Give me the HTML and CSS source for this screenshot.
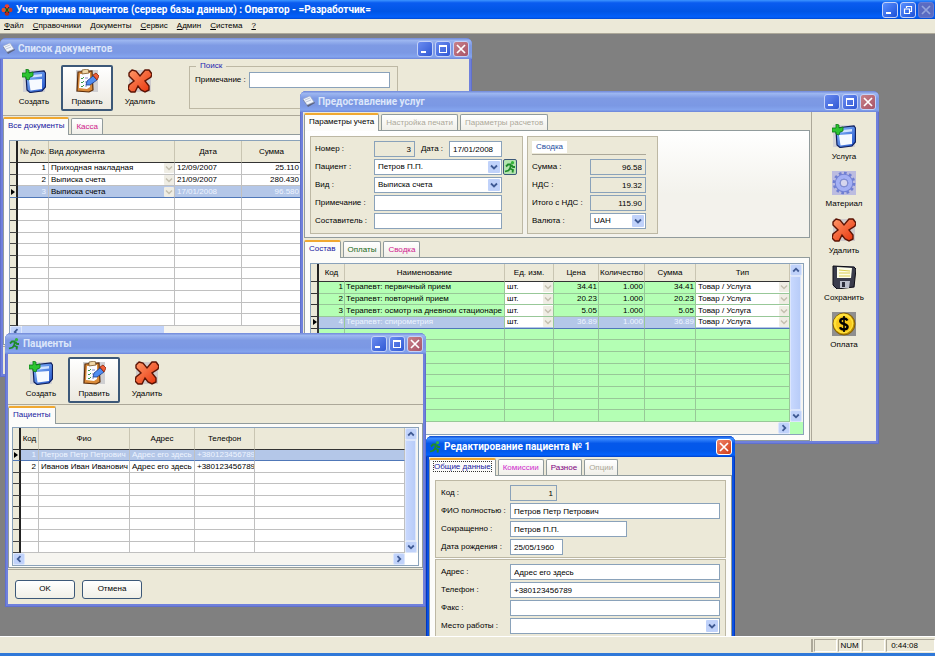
FILE: index.html
```html
<!DOCTYPE html>
<html lang="ru">
<head>
    <meta charset="UTF-8">
    <meta name="viewport" content="width=device-width, initial-scale=1.0">
    <title>Учет приема пациентов</title>
    <link rel="stylesheet" href="styles.css">
</head>
<body>
    <!-- Shared icons -->
    <svg class="defs" width="0" height="0" aria-hidden="true">
        <defs>
            <linearGradient id="gBlue" x1="0" y1="0" x2="1" y2="1">
                <stop offset="0" stop-color="#8fc0ff"/><stop offset="1" stop-color="#1f50c8"/>
            </linearGradient>
            <linearGradient id="gRed" x1="0" y1="0" x2="1" y2="1">
                <stop offset="0" stop-color="#ff9a6a"/><stop offset="1" stop-color="#e83008"/>
            </linearGradient>
        </defs>
        <symbol id="i-new" viewBox="0 0 24 24">
            <rect x="1" y="1" width="22" height="22" fill="#d3d3d6"/>
            <path d="M4 6 L8 3.500 L22 2 L23.500 4 V18 L20 22 L8 23.500 L5 21 Z" fill="url(#gBlue)" stroke="#10205c" stroke-width="1.2"/>
            <path d="M7 11 L20 10 L20 20 L8.500 21.500 Z" fill="#f6faff"/>
            <path d="M10 6 L20 5 V7.500 L10 8.500 Z" fill="#cfe2ff"/>
            <path d="M4 0 L7 1 L7 4 L11 3 L11 7 L8 8 L7 11 L4 10 L4 8 L0 8 L0 4 L4 4 Z" fill="#2cc431" stroke="#0c7a14" stroke-width=".8"/>
        </symbol>
        <symbol id="i-edit" viewBox="0 0 24 24">
            <rect x="1" y="1" width="22" height="22" fill="#cfcfd2"/>
            <path d="M3 3 L17 2 L18 21 L14 23 L2 22 Z" fill="#d98a3a" stroke="#5c2c08" stroke-width="1.2"/>
            <path d="M5 5 L15 4 L15 18 L12 20 L4 19 Z" fill="#fbfbff"/>
            <path d="M7 1 L13 0 L14 4 L7 5 Z" fill="#f1d8a8" stroke="#6b4a20" stroke-width=".7"/>
            <path d="M6 9 l1 1 2-2 M6 13 l1 1 2-2 M6 17 l1 1 2-2" fill="none" stroke="#3a9a48" stroke-width="1"/>
            <path d="M10 9 H13 M10 13 H12 M10 17 H12" stroke="#8888c8" stroke-width="1"/>
            <path d="M12 12 L18 7 L22 11 L15 16 L11 16 Z" fill="#4f8cf0" stroke="#1b3c90" stroke-width=".8"/>
            <path d="M18 6 L21 4 L24 7 L22 11 Z" fill="#f0603a" stroke="#8c2408" stroke-width=".8"/>
        </symbol>
        <symbol id="i-delete" viewBox="0 0 24 24">
            <rect x="1" y="1" width="22" height="22" fill="#cfcbcb"/>
            <path d="M4 1 L8 2 L12 7 L17 1 L21 1 L24 5 L23 8 L17 12 L21 17 L21 21 L17 23 L13 21 L10 17 L7 23 L3 23 L0 20 L1 16 L6 12 L1 7 L1 4 Z" fill="url(#gRed)" stroke="#5c1404" stroke-width="1.4"/>
        </symbol>
        <symbol id="i-gear" viewBox="0 0 24 24">
            <rect width="24" height="24" fill="#bcbce0"/>
            <circle cx="12" cy="12" r="9.800" fill="none" stroke="#6f7fd2" stroke-width="3" stroke-dasharray="2.600 2.500"/>
            <circle cx="12" cy="12" r="6.500" fill="none" stroke="#7482d4" stroke-width="5.500"/>
            <circle cx="12" cy="12" r="6.300" fill="none" stroke="#a4b0f4" stroke-width="4"/>
            <circle cx="12" cy="12" r="3.800" fill="#d6d6ee" stroke="#6676c4" stroke-width=".8"/>
        </symbol>
        <symbol id="i-save" viewBox="0 0 24 24">
            <rect x="1" y="1" width="22" height="22" fill="#c9c9cc"/>
            <path d="M1 1 L22 2 L24 4 L22 22 L5 24 L1 20 Z" fill="#3a3c4c" stroke="#0c0c14" stroke-width="1"/>
            <path d="M5 2 L20 3 L19 13 L5 13 Z" fill="#fdfde8"/>
            <path d="M7 5 L18 6 M7 8 L18 8 M7 11 L18 11" stroke="#d8cc50" stroke-width="1"/>
            <path d="M8 16 H18 L17 23 L8 23 Z" fill="#bcc0cc"/>
            <path d="M10 17 H13 V22 H10 Z" fill="#2c2e3c"/>
        </symbol>
        <symbol id="i-pay" viewBox="0 0 24 24">
            <rect width="24" height="24" fill="#8f8f8f"/>
            <circle cx="12" cy="12" r="11" fill="#b88a00" stroke="#7a5600" stroke-width=".8"/>
            <circle cx="11.5" cy="11.5" r="10" fill="#ffe23a"/>
            <circle cx="12" cy="12" r="8" fill="#f8c81c"/>
            <path d="M15.5 8.5 C14 5.6 8 6 8.300 9.300 C8.600 12.500 15.500 11.200 15.600 14.800 C15.600 18 9.500 18.400 8 15.200" fill="none" stroke="#000" stroke-width="2.4"/>
            <path d="M12 4 V20" stroke="#000" stroke-width="1.6"/>
        </symbol>
        <symbol id="i-doc" viewBox="0 0 12 12">
            <path d="M0 4 L7 1 L12 7 L5 11 Z" fill="#5c6480"/>
            <path d="M0 3 L7 0 L11 6 L4 9 Z" fill="#f2f6fc" stroke="#9aa8c4" stroke-width=".6"/>
            <path d="M2 4 L7 2 M3 6 L8 4" stroke="#a8b4cc" stroke-width=".7"/>
        </symbol>
        <symbol id="i-run" viewBox="0 0 12 12">
            <circle cx="8.500" cy="1.700" r="1.600" fill="#35b43a"/>
            <path d="M7.500 3.500 L4 3.500 L2 5.500 M7 4 L6 7.500 L9 9 L8.500 11.500 M6 7.500 L4.500 9.500 L1 10.500 M7.500 4 L9 6 L11 6" fill="none" stroke="#1f8c2a" stroke-width="1.800"/>
        </symbol>
        <symbol id="i-app" viewBox="0 0 12 12">
            <circle cx="6" cy="2.500" r="2.300" fill="#f0402c"/>
            <circle cx="2.800" cy="6" r="2.300" fill="#e8502c"/>
            <circle cx="9.200" cy="6" r="2.300" fill="#c83c28"/>
            <circle cx="6" cy="9.500" r="2.300" fill="#b4281c"/>
            <circle cx="6" cy="6" r="2" fill="#38a83c"/>
            <path d="M4 3 L8 9 M8 3 L4 9" stroke="#2c1408" stroke-width=".8"/>
        </symbol>
        <symbol id="i-min" viewBox="0 0 12 12"><path d="M2 8 H7 V10 H2 Z" fill="#fff"/></symbol>
        <symbol id="i-max" viewBox="0 0 12 12"><path d="M2 2 H10 V10 H2 Z M3 4 V9 H9 V4 Z" fill="#fff" fill-rule="evenodd"/></symbol>
        <symbol id="i-restore" viewBox="0 0 12 12">
            <path d="M4.500 4 V2.500 H9.500 V7.500 H8 M2.500 5 H7.500 V9.500 H2.500 Z" fill="none" stroke="#fff" stroke-width="1.200"/>
        </symbol>
        <symbol id="i-close" viewBox="0 0 12 12"><path d="M2 2 L10 10 M10 2 L2 10" stroke="#fff" stroke-width="1.700"/></symbol>
        <symbol id="i-chevron" viewBox="0 0 8 8"><path d="M1.200 2.500 L4 5.300 L6.800 2.500" fill="none" stroke="#3f5a94" stroke-width="1.800"/></symbol>
    </svg>

    <header class="app-title">
        <svg class="title-icon"><use href="#i-app"/></svg>
        <h1>Учет приема пациентов (сервер базы данных) : Оператор - =Разработчик=</h1>
        <div class="win-buttons">
            <button class="win-btn bright" aria-label="Свернуть"><svg><use href="#i-min"/></svg></button>
            <button class="win-btn bright" aria-label="Восстановить"><svg><use href="#i-restore"/></svg></button>
            <button class="win-btn off" aria-label="Закрыть" disabled><svg><use href="#i-close"/></svg></button>
        </div>
    </header>

    <nav class="menu">
        <a href="#"><u>Ф</u>айл</a>
        <a href="#"><u>С</u>правочники</a>
        <a href="#"><u>Д</u>окументы</a>
        <a href="#"><u>С</u>ервис</a>
        <a href="#"><u>А</u>дмин</a>
        <a href="#"><u>С</u>истема</a>
        <a href="#"><u>?</u></a>
    </nav>

    <main class="desktop">
        <!-- Documents list -->
        <section class="window win-docs">
            <div class="caption">
                <svg class="title-icon"><use href="#i-doc"/></svg>
                <h2>Список документов</h2>
                <div class="win-buttons">
                    <button class="win-btn" aria-label="Свернуть"><svg><use href="#i-min"/></svg></button>
                    <button class="win-btn" aria-label="Развернуть"><svg><use href="#i-max"/></svg></button>
                    <button class="win-btn close" aria-label="Закрыть"><svg><use href="#i-close"/></svg></button>
                </div>
            </div>
            <div class="client">
                <div class="toolbar">
                    <button class="tool"><svg><use href="#i-new"/></svg>Создать</button>
                    <button class="tool current"><svg><use href="#i-edit"/></svg>Править</button>
                    <button class="tool"><svg><use href="#i-delete"/></svg>Удалить</button>
                    <fieldset class="search">
                        <legend>Поиск</legend>
                        <label for="searchNote">Примечание :</label>
                        <input type="text" id="searchNote">
                    </fieldset>
                </div>
                <div class="tabs">
                    <button class="tab active blue">Все документы</button>
                    <button class="tab pink">Касса</button>
                </div>
                <div class="page">
                    <div class="grid">
                        <table class="docs" data-rows="14">
                            <colgroup><col class="c-mark"><col class="c-no"><col class="c-kind"><col class="c-date"><col class="c-sum"><col></colgroup>
                            <thead>
                                <tr><th></th><th>№ Док.</th><th class="left">Вид документа</th><th>Дата</th><th>Сумма</th><th></th></tr>
                            </thead>
                            <tbody>
                                <tr><td></td><td class="num">1</td><td class="combo"><select aria-label="Вид документа 1" disabled><option>Приходная накладная</option></select></td><td>12/09/2007</td><td class="num">25.110</td><td></td></tr>
                                <tr><td></td><td class="num">2</td><td class="combo"><select aria-label="Вид документа 2" disabled><option>Выписка счета</option></select></td><td>21/09/2007</td><td class="num">280.430</td><td></td></tr>
                                <tr class="selected"><td></td><td class="num">3</td><td class="combo"><select aria-label="Вид документа 3" disabled><option>Выписка счета</option></select></td><td>17/01/2008</td><td class="num">96.580</td><td></td></tr>
                            </tbody>
                        </table>
                        <div class="hscroll">
                            <button class="arrow left" aria-label="Влево"><svg><use href="#i-chevron"/></svg></button>
                            <span class="thumb"></span>
                            <button class="arrow right" aria-label="Вправо"><svg><use href="#i-chevron"/></svg></button>
                        </div>
                    </div>
                </div>
                <div class="footer"></div>
            </div>
        </section>

        <!-- Services -->
        <section class="window win-services">
            <div class="caption">
                <svg class="title-icon"><use href="#i-doc"/></svg>
                <h2>Предоставление услуг</h2>
                <div class="win-buttons">
                    <button class="win-btn" aria-label="Свернуть"><svg><use href="#i-min"/></svg></button>
                    <button class="win-btn" aria-label="Развернуть"><svg><use href="#i-max"/></svg></button>
                    <button class="win-btn close" aria-label="Закрыть"><svg><use href="#i-close"/></svg></button>
                </div>
            </div>
            <div class="client split">
                <div class="work">
                    <div class="tabs">
                        <button class="tab active">Параметры учета</button>
                        <button class="tab" disabled>Настройка печати</button>
                        <button class="tab" disabled>Параметры расчетов</button>
                    </div>
                    <div class="page params">
                        <div class="panel form">
                            <label for="number">Номер :</label>
                            <div class="field pair">
                                <input type="text" class="num" id="number" value="3" readonly>
                                <label for="date">Дата :</label>
                                <input type="text" class="date" id="date" value="17/01/2008">
                            </div>
                            <label for="patient">Пациент :</label>
                            <div class="field with-btn">
                                <select id="patient"><option>Петров П.П.</option></select>
                                <button class="run" aria-label="Открыть пациента"><svg><use href="#i-run"/></svg></button>
                            </div>
                            <label for="kind">Вид :</label>
                            <select id="kind"><option>Выписка счета</option></select>
                            <label for="note">Примечание :</label>
                            <input type="text" id="note">
                            <label for="author">Составитель :</label>
                            <input type="text" id="author">
                        </div>
                        <div class="panel form totals">
                            <h3><span>Сводка</span></h3>
                            <label for="sum">Сумма :</label>
                            <input type="text" class="num" id="sum" value="96.58" readonly>
                            <label for="vat">НДС :</label>
                            <input type="text" class="num" id="vat" value="19.32" readonly>
                            <label for="total">Итого с НДС :</label>
                            <input type="text" class="num" id="total" value="115.90" readonly>
                            <label for="currency">Валюта :</label>
                            <select id="currency"><option>UAH</option></select>
                        </div>
                    </div>
                    <div class="tabs lower">
                        <button class="tab active blue">Состав</button>
                        <button class="tab green">Оплаты</button>
                        <button class="tab pink">Сводка</button>
                    </div>
                    <div class="page">
                        <div class="grid has-v">
                            <table class="items" data-rows="12">
                                <colgroup><col class="c-mark"><col class="c-code"><col><col class="c-unit"><col class="c-price"><col class="c-qty"><col class="c-total"><col class="c-type"></colgroup>
                                <thead>
                                    <tr><th></th><th>Код</th><th>Наименование</th><th>Ед. изм.</th><th>Цена</th><th>Количество</th><th>Сумма</th><th>Тип</th></tr>
                                </thead>
                                <tbody>
                                    <tr><td></td><td class="num">1</td><td>Терапевт: первичный прием</td><td class="combo"><select aria-label="Ед. изм. 1" disabled><option>шт.</option></select></td><td class="num">34.41</td><td class="num">1.000</td><td class="num">34.41</td><td class="combo"><select aria-label="Тип 1" disabled><option>Товар / Услуга</option></select></td></tr>
                                    <tr><td></td><td class="num">2</td><td>Терапевт: повторний прием</td><td class="combo"><select aria-label="Ед. изм. 2" disabled><option>шт.</option></select></td><td class="num">20.23</td><td class="num">1.000</td><td class="num">20.23</td><td class="combo"><select aria-label="Тип 2" disabled><option>Товар / Услуга</option></select></td></tr>
                                    <tr><td></td><td class="num">3</td><td>Терапевт: осмотр на дневном стационаре</td><td class="combo"><select aria-label="Ед. изм. 3" disabled><option>шт.</option></select></td><td class="num">5.05</td><td class="num">1.000</td><td class="num">5.05</td><td class="combo"><select aria-label="Тип 3" disabled><option>Товар / Услуга</option></select></td></tr>
                                    <tr class="selected"><td></td><td class="num">4</td><td>Терапевт: спирометрия</td><td class="combo"><select aria-label="Ед. изм. 4" disabled><option>шт.</option></select></td><td class="num">36.89</td><td class="num">1.000</td><td class="num">36.89</td><td class="combo"><select aria-label="Тип 4" disabled><option>Товар / Услуга</option></select></td></tr>
                                </tbody>
                            </table>
                            <div class="vscroll">
                                <button class="arrow up" aria-label="Вверх"><svg><use href="#i-chevron"/></svg></button>
                                <span class="thumb"></span>
                                <button class="arrow" aria-label="Вниз"><svg><use href="#i-chevron"/></svg></button>
                            </div>
                            <div class="hscroll">
                                <button class="arrow left" aria-label="Влево"><svg><use href="#i-chevron"/></svg></button>
                                <button class="arrow right" aria-label="Вправо"><svg><use href="#i-chevron"/></svg></button>
                            </div>
                            <div class="corner green"></div>
                        </div>
                    </div>
                </div>
                <div class="sidebar">
                    <button class="tool"><svg><use href="#i-new"/></svg>Услуга</button>
                    <button class="tool"><svg><use href="#i-gear"/></svg>Материал</button>
                    <button class="tool"><svg><use href="#i-delete"/></svg>Удалить</button>
                    <button class="tool"><svg><use href="#i-save"/></svg>Сохранить</button>
                    <button class="tool"><svg><use href="#i-pay"/></svg>Оплата</button>
                </div>
            </div>
        </section>

        <!-- Patients -->
        <section class="window win-patients">
            <div class="caption">
                <svg class="title-icon"><use href="#i-run"/></svg>
                <h2>Пациенты</h2>
                <div class="win-buttons">
                    <button class="win-btn" aria-label="Свернуть"><svg><use href="#i-min"/></svg></button>
                    <button class="win-btn" aria-label="Развернуть"><svg><use href="#i-max"/></svg></button>
                    <button class="win-btn close" aria-label="Закрыть"><svg><use href="#i-close"/></svg></button>
                </div>
            </div>
            <div class="client">
                <div class="toolbar">
                    <button class="tool"><svg><use href="#i-new"/></svg>Создать</button>
                    <button class="tool current"><svg><use href="#i-edit"/></svg>Править</button>
                    <button class="tool"><svg><use href="#i-delete"/></svg>Удалить</button>
                </div>
                <div class="tabs">
                    <button class="tab active blue">Пациенты</button>
                </div>
                <div class="page">
                    <div class="grid has-v">
                        <table class="people" data-rows="9">
                            <colgroup><col class="c-mark"><col class="c-id"><col class="c-name"><col class="c-addr"><col class="c-phone"><col></colgroup>
                            <thead>
                                <tr><th></th><th>Код</th><th>Фио</th><th>Адрес</th><th>Телефон</th><th></th></tr>
                            </thead>
                            <tbody>
                                <tr class="selected"><td></td><td class="num">1</td><td>Петров Петр Петрович</td><td>Адрес его здесь</td><td>+380123456789</td><td></td></tr>
                                <tr><td></td><td class="num">2</td><td>Иванов Иван Иванович</td><td>Адрес его здесь</td><td>+380123456789</td><td></td></tr>
                            </tbody>
                        </table>
                        <div class="vscroll">
                            <button class="arrow up" aria-label="Вверх"><svg><use href="#i-chevron"/></svg></button>
                            <span class="thumb"></span>
                            <button class="arrow" aria-label="Вниз"><svg><use href="#i-chevron"/></svg></button>
                        </div>
                        <div class="hscroll">
                            <button class="arrow left" aria-label="Влево"><svg><use href="#i-chevron"/></svg></button>
                            <button class="arrow right" aria-label="Вправо"><svg><use href="#i-chevron"/></svg></button>
                        </div>
                        <div class="corner"></div>
                    </div>
                </div>
                <div class="footer actions">
                    <button class="action">OK</button>
                    <button class="action">Отмена</button>
                </div>
            </div>
        </section>

        <!-- Patient card -->
        <section class="window focused win-card">
            <div class="caption">
                <svg class="title-icon"><use href="#i-run"/></svg>
                <h2>Редактирование пациента № 1</h2>
                <div class="win-buttons">
                    <button class="win-btn close" aria-label="Закрыть"><svg><use href="#i-close"/></svg></button>
                </div>
            </div>
            <div class="client">
                <div class="tabs">
                    <button class="tab active blue"><span class="focus">Общие данные</span></button>
                    <button class="tab magenta">Комиссии</button>
                    <button class="tab purple">Разное</button>
                    <button class="tab" disabled>Опции</button>
                </div>
                <div class="page cards">
                    <div class="panel form">
                        <label for="pCode">Код :</label>
                        <input type="text" class="num w-code" id="pCode" value="1" readonly>
                        <label for="pName">ФИО полностью :</label>
                        <input type="text" id="pName" value="Петров Петр Петрович">
                        <label for="pShort">Сокращенно :</label>
                        <input type="text" class="w-short" id="pShort" value="Петров П.П.">
                        <label for="pBirth">Дата рождения :</label>
                        <input type="text" class="w-date" id="pBirth" value="25/05/1960">
                    </div>
                    <div class="panel form">
                        <label for="pAddr">Адрес :</label>
                        <input type="text" id="pAddr" value="Адрес его здесь">
                        <label for="pPhone">Телефон :</label>
                        <input type="text" id="pPhone" value="+380123456789">
                        <label for="pFax">Факс :</label>
                        <input type="text" id="pFax">
                        <label for="pWork">Место работы :</label>
                        <select id="pWork"><option></option></select>
                        <span></span>
                        <input type="text" aria-label="Должность">
                    </div>
                </div>
            </div>
        </section>
    </main>

    <footer class="status">
        <span class="cell msg"></span>
        <span class="cell"></span>
        <span class="cell">NUM</span>
        <span class="cell"></span>
        <span class="cell clock">0:44:08</span>
    </footer>

    <script>
        // Pad every grid with empty rows
        document.querySelectorAll('table[data-rows]').forEach(table => {
            const body = table.tBodies[0];
            const columns = table.tHead.rows[0].cells.length;
            while (body.rows.length < Number(table.dataset.rows)) {
                const row = body.insertRow();
                for (let i = 0; i < columns; i++) {
                    row.insertCell();
                }
            }
        });
    </script>
</body>
</html>
```
FILE: styles.css
```css
* {
    box-sizing: border-box;
}
body {
    margin: 0;
    height: 100vh;
    display: flex;
    flex-direction: column;
    overflow: hidden;
    background: #ece9d8;
    border-bottom: 3px solid #2f78d8;
    font-family: "Liberation Sans", Arial, sans-serif;
    font-size: 8px;
    line-height: 10px;
    color: #000;
}
button, input, select {
    font: inherit;
    color: inherit;
    margin: 0;
}
h1, h2, h3 {
    margin: 0;
    font-size: 8px;
    font-weight: normal;
}
.defs {
    position: absolute;
}

/* Title bars */
.app-title, .caption {
    display: flex;
    align-items: center;
    gap: 3px;
    color: #fff;
    flex: none;
}
.app-title {
    height: 19px;
    padding: 0 1px 0 1px;
    background: linear-gradient(#3d95ff, #0a5cf0 15%, #0055e5 60%, #0360fb 90%, #0048d0);
}
.app-title h1, .caption h2 {
    flex: 1;
    font-family: Roboto, sans-serif;
    font-size: 10px;
    line-height: 14px;
    font-weight: bold;
    white-space: nowrap;
}
.title-icon {
    width: 12px;
    height: 12px;
    flex: none;
}
.win-buttons {
    display: flex;
    gap: 2px;
}
.win-btn {
    width: 16px;
    height: 16px;
    padding: 1px;
    border: 1px solid #c4d2f8;
    border-radius: 3px;
    background: linear-gradient(135deg, #6a8cf0, #3058d4);
    display: flex;
}
.win-btn svg {
    width: 12px;
    height: 12px;
}
.win-btn.bright {
    background: linear-gradient(135deg, #5a90ff, #1c50d8);
}
.win-btn.close {
    background: linear-gradient(135deg, #c88088, #a85468);
}
.win-btn.off {
    background: #7070b8;
    border-color: #8484c8;
    opacity: .8;
}
.win-btn.off svg {
    opacity: .5;
}
.focused .win-btn.close {
    background: linear-gradient(135deg, #f08468, #d03c18);
    border-color: #fff;
}

/* Menu */
.menu {
    display: flex;
    gap: 9px;
    height: 15px;
    padding: 2px 4px;
    font-size: 8px;
    background: #ece9d8;
    border-bottom: 1px solid #aca899;
    flex: none;
}
.menu a {
    color: #000;
    text-decoration: none;
}

/* Windows */
.desktop {
    flex: 1;
    min-height: 0;
    position: relative;
    overflow: hidden;
    background: #808080;
}
.window {
    position: absolute;
    display: flex;
    flex-direction: column;
    padding: 0 3px 3px;
    border-radius: 6px 6px 0 0;
    background: #6f80dc;
    box-shadow: inset 0 0 0 1px #6070cc;
}
.caption {
    height: 21px;
    margin: 0 -3px;
    padding: 0 3px;
    border-radius: 6px 6px 0 0;
    background: linear-gradient(#7088d8, #9cb6f0 12%, #7e9ae4 35%, #7b98e4 70%, #84a4ee 90%, #6c84d8);
    color: #dce6fa;
}
.focused {
    background: #0a50e0;
    box-shadow: inset 0 0 0 1px #0038c0;
}
.focused .caption {
    background: linear-gradient(#0a48d0, #3c8cff 12%, #0558ea 35%, #0258ea 70%, #0462fc 90%, #0040c8);
    color: #fff;
}
.win-docs {
    left: 0;
    top: 4px;
    width: 472px;
    height: 339px;
}
.win-services {
    left: 300px;
    top: 57px;
    width: 579px;
    height: 353px;
}
.win-patients {
    left: 5px;
    top: 299px;
    width: 421px;
    height: 274px;
}
.win-card {
    left: 426px;
    top: 402px;
    width: 309px;
    height: 300px;
}
.client {
    flex: 1;
    min-height: 0;
    display: flex;
    flex-direction: column;
    background: #ece9d8;
}
.client.split {
    flex-direction: row;
}
.work {
    flex: 1;
    min-width: 0;
    display: flex;
    flex-direction: column;
    padding: 0 1px;
}

/* Toolbars */
.toolbar {
    display: flex;
    align-items: flex-start;
    gap: 1px;
    padding: 3px 7px 1px;
    border-bottom: 1px solid #aca899;
}
.win-docs .toolbar {
    padding: 6px 5px 4px;
}
.tool {
    width: 52px;
    height: 46px;
    padding: 3px 0 0;
    border: 1px solid transparent;
    border-radius: 2px;
    background: none;
    display: flex;
    flex-direction: column;
    align-items: center;
    gap: 4px;
}
.tool svg {
    width: 24px;
    height: 24px;
    flex: none;
}
.tool.current {
    border: 2px solid #3c5878;
    padding: 2px 0 0;
    background: linear-gradient(#fff, #ece9e0);
}
.search {
    width: 208px;
    margin: -4px 0 0 22px;
    padding: 1px 7px 20px 5px;
    border: 1px solid #bdb8a4;
    display: flex;
    align-items: center;
    gap: 3px;
    white-space: nowrap;
}
.search legend {
    padding: 0 4px;
    margin-left: 1px;
    color: #1c1cb0;
}
.search input {
    flex: none;
    width: 141px;
    margin-left: auto;
}
.sidebar {
    width: 65px;
    padding: 8px 0 0;
    border-left: 1px solid #aca899;
    display: flex;
    flex-direction: column;
    align-items: center;
    gap: 1px;
}

/* Tabs */
.tabs {
    display: flex;
    align-items: flex-end;
    gap: 2px;
    height: 18px;
    flex: none;
}
.tabs.lower {
    height: 19px;
}
.tab {
    height: 16px;
    padding: 0 4px;
    border: 1px solid #919b9c;
    border-bottom: 0;
    border-radius: 2px 2px 0 0;
    background: linear-gradient(#fff, #f0efe8);
    white-space: nowrap;
}
.tab.active {
    height: 18px;
    margin-bottom: -1px;
    padding: 0 4px 2px;
    border-top: 2px solid #f0a830;
    background: #fcfcfa;
    z-index: 1;
}
.tab:disabled {
    color: #aca899;
}
.focus {
    outline: 1px dotted #333;
}
.blue {
    color: #1818a0;
}
.pink {
    color: #d0208c;
}
.green {
    color: #186818;
}
.magenta {
    color: #d028d0;
}
.purple {
    color: #800080;
}
.page {
    flex: 1;
    min-height: 0;
    display: flex;
    padding: 5px;
    border: 1px solid #919b9c;
    background: #fcfcfa;
}
.win-patients .page {
    padding: 3px 3px 1px;
}
.page.params {
    flex: none;
    gap: 4px;
    padding: 5px 5px 3px;
    background: linear-gradient(#fff, #f3f2ec 60%);
}
.page.cards {
    flex-direction: column;
    gap: 1px;
    padding: 4px 5px;
}
.footer {
    height: 28px;
    border-top: 1px solid #aca899;
    margin-top: 1px;
}
.footer.actions {
    height: 35px;
    display: flex;
    gap: 7px;
    align-items: center;
    padding: 4px 7px 0;
}
.action {
    width: 60px;
    height: 19px;
    padding: 0;
    border: 1px solid #3c5878;
    border-radius: 3px;
    background: linear-gradient(#fff, #f0efe6);
}

/* Forms */
.panel {
    border: 1px solid #bdb8a4;
    background: #ece9d8;
}
.form {
    display: grid;
    grid-template-columns: 57px 128px;
    grid-auto-rows: 16px;
    align-content: start;
    align-items: center;
    gap: 2px;
    width: 213px;
    padding: 4px;
    white-space: nowrap;
}
.form.totals {
    grid-template-columns: 56px 56px;
    width: 131px;
}
.totals h3 {
    grid-column: 1 / -1;
    height: 14px;
    align-self: start;
    border-bottom: 1px solid #aca899;
    color: #1c4ca0;
}
.totals h3 span {
    display: inline-block;
    padding: 1px 4px;
    background: #fff;
}
.cards .form {
    width: auto;
    grid-template-columns: 67px 210px;
    padding: 4px 5px 2px;
}
input, select {
    width: 100%;
    height: 16px;
    padding: 0 3px;
    border: 1px solid #8aa2ba;
    border-radius: 0;
    background: #fff;
}
input[readonly] {
    background: #ece9d8;
}
.num {
    text-align: right;
}
select {
    appearance: none;
    background: #fff url("data:image/svg+xml,%3Csvg xmlns='http://www.w3.org/2000/svg' width='12' height='12'%3E%3Crect width='12' height='12' rx='1' fill='%23c0d2fa'/%3E%3Cpath d='M3 4.500 L6 7.500 L9 4.500' fill='none' stroke='%233f5a94' stroke-width='1.800'/%3E%3C/svg%3E") no-repeat right 1px center;
    opacity: 1;
}
.pair {
    display: grid;
    grid-template-columns: 41px 1fr 53px;
    align-items: center;
    text-align: center;
}
.with-btn {
    display: flex;
    gap: 1px;
    margin-right: -15px;
}
.run {
    width: 14px;
    height: 16px;
    flex: none;
    padding: 0;
    border: 1px solid #3c5878;
    border-radius: 2px;
    background: #b4e4b0;
    display: flex;
    align-items: center;
}
.run svg {
    width: 12px;
    height: 12px;
}
.w-code {
    width: 47px;
}
.w-short {
    width: 117px;
}
.w-date {
    width: 53px;
}

/* Data grids */
.grid {
    flex: 1;
    min-width: 0;
    display: grid;
    grid-template-columns: 1fr;
    grid-template-rows: 1fr 12px;
    border: 1px solid #8aa2ba;
    background: #fff;
}
.grid.has-v {
    grid-template-columns: 1fr 13px;
}
table {
    width: 100%;
    table-layout: fixed;
    border-collapse: separate;
    border-spacing: 0;
    line-height: 10px;
}
th {
    padding: 0;
    height: 22px;
    font-weight: normal;
    background: #ece9d8;
    border-right: 1px solid #c9c5b2;
    border-bottom: 1px solid #333;
    white-space: nowrap;
}
.items th {
    height: 18px;
}
th.left {
    text-align: left;
}
td {
    height: 11px;
    padding: 0 2px;
    border-right: 1px solid #c0c0c0;
    border-bottom: 1px solid #c0c0c0;
    white-space: nowrap;
    overflow: hidden;
}
th:first-child, td:first-child {
    background: #ece9d8;
    border-right: 2px solid #222;
}
td:first-child {
    padding: 0;
    border-bottom-color: #444;
}
.items tbody {
    background: #b4ffb4;
}
.items td {
    padding: 0 1px;
    border-color: #98c898;
}
.items td:first-child {
    border-color: #333;
}
tr.selected td {
    background: #b4c7e8;
    color: #eef4ff;
    border-bottom-color: #5078b8;
}
tr.selected td:first-child {
    background: #ece9d8;
}
tr.selected td:first-child::before {
    content: "";
    display: block;
    width: 0;
    margin-left: 1px;
    border: 3px solid transparent;
    border-left: 4px solid #000;
    border-right: 0;
}
td.combo {
    padding: 0;
    background: #fff;
}
td select {
    display: block;
    height: 10px;
    padding: 0 2px;
    border: 0;
    color: #000;
    background: #fff url("data:image/svg+xml,%3Csvg xmlns='http://www.w3.org/2000/svg' width='10' height='10'%3E%3Crect width='10' height='10' rx='1' fill='%23efede4'/%3E%3Cpath d='M2 3.500 L5 6.500 L8 3.500' fill='none' stroke='%23c4c0b0' stroke-width='1.500'/%3E%3C/svg%3E") no-repeat right center;
}
.docs .selected select {
    background-color: #b4c7e8;
}
.c-mark { width: 8px; }
.c-no { width: 31px; }
.c-kind { width: 126px; }
.c-date { width: 67px; }
.c-sum { width: 60px; }
.c-code { width: 26px; }
.c-unit { width: 49px; }
.c-price { width: 45px; }
.c-qty { width: 46px; }
.c-total { width: 51px; }
.c-type { width: 94px; }
.c-id { width: 18px; }
.c-name { width: 91px; }
.c-addr { width: 65px; }
.c-phone { width: 60px; }

/* Scroll bars */
.vscroll, .hscroll {
    display: flex;
    background: #f6f5f0;
}
.vscroll {
    flex-direction: column;
}
.hscroll {
    justify-content: space-between;
}
.arrow {
    width: 12px;
    height: 12px;
    flex: none;
    padding: 1px;
    border: 1px solid #dce6fc;
    border-radius: 2px;
    background: #c0d2fa;
    display: flex;
}
.arrow svg {
    width: 8px;
    height: 8px;
}
.arrow.up svg {
    transform: rotate(180deg);
}
.arrow.left svg {
    transform: rotate(90deg);
}
.arrow.right svg {
    transform: rotate(-90deg);
}
.vscroll .thumb {
    flex: 1;
    width: 11px;
    border: 1px solid #dce6fc;
    background: linear-gradient(90deg, #c8d8fe, #b8ccf8);
}
.hscroll .thumb {
    width: 142px;
    margin-right: auto;
    background: #c0d2fa;
}
.corner.green {
    background: #b4ffb4;
}

/* Status bar */
.status {
    display: flex;
    gap: 1px;
    height: 17px;
    padding: 2px 0 1px;
    flex: none;
    background: #ece9d8;
    border-top: 1px solid #fff;
}
.cell {
    width: 23px;
    border: 1px solid;
    border-color: #aca899 #fff #fff #aca899;
    text-align: center;
    line-height: 12px;
}
.cell.msg {
    flex: 1;
    border-width: 0 2px 0 0;
    border-color: #aca899;
}
.cell.clock {
    width: 49px;
    padding-right: 12px;
}
```
